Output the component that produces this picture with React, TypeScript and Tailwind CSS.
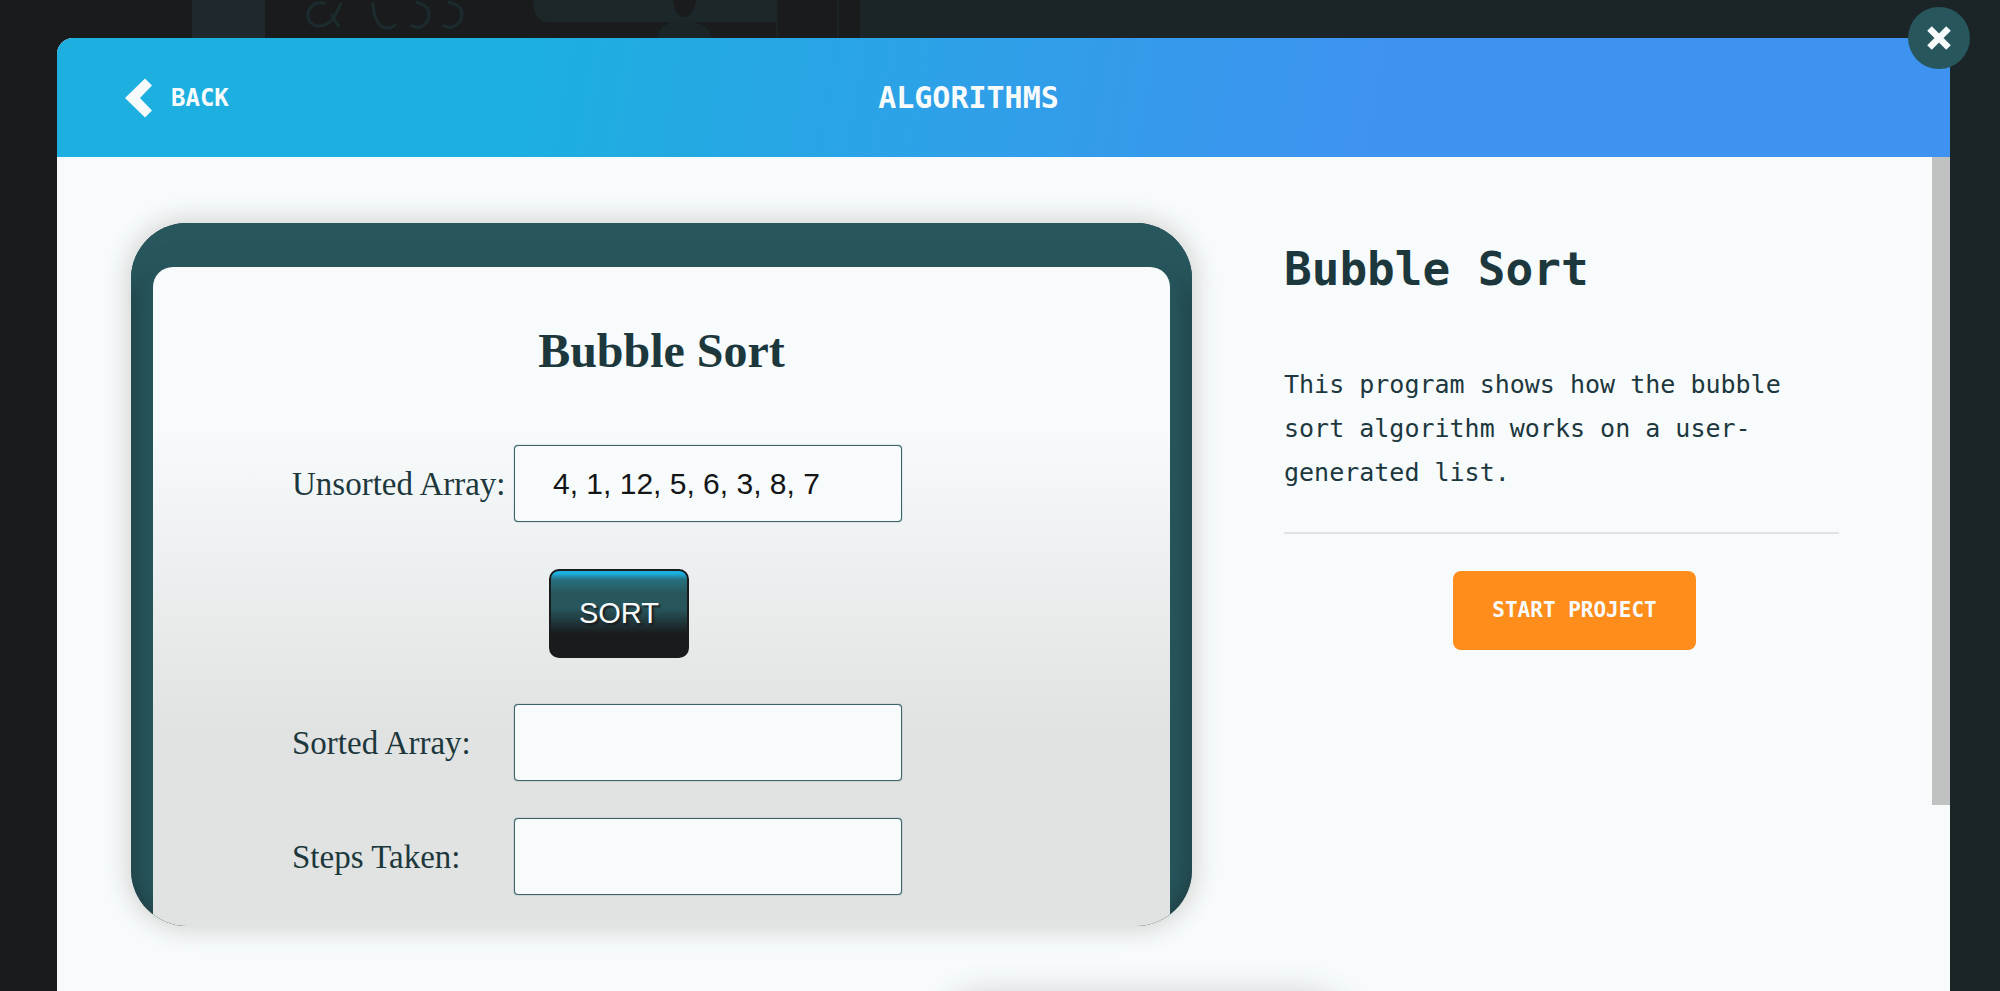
import React from "react";

const MONO = "font-['DejaVu_Sans_Mono',monospace]";

function Backdrop() {
  return (
    <div aria-hidden="true" className="absolute inset-0 flex overflow-hidden">
      <svg className="h-10 w-[860px] shrink-0" viewBox="0 0 860 40">
        <rect x="192" y="0" width="73" height="40" fill="#1d292c" />
        <g fill="none" stroke="#1c2b2e" strokeWidth="3">
          <path d="M326 3h-7c-6 0-11 5-11 12s5 11 11 11c12 0 17-11 22-23M331 14l8 13" />
          <path d="M373 2c0 14 5 26 14 26 4 0 7-2 9-4M410 25c10 6 19-1 19-11 0-6-5-10-13-12M442 25c10 6 20-1 20-11 0-6-5-10-14-12" />
        </g>
        <path d="M533 0h140c1 10 5 17 11 17s11-7 12-17h80v22H547c-9 0-14-10-14-22z" fill="#1c272a" />
        <path d="M656 40c2-10 8-16 16-18h22c10 2 16 8 19 18z" fill="#1b2427" />
        <path d="M777 0v40M838 0v40" stroke="#1c2d31" strokeWidth="1" />
      </svg>
      <div className="grow bg-[#1b2427]" />
    </div>
  );
}

function Field({ id, label, value }: { id: string; label: string; value?: string }) {
  return (
    <div className="flex items-center">
      <label htmlFor={id} className="w-[222px] shrink-0 text-[33px] leading-[40px] whitespace-nowrap">
        {label}
      </label>
      <input
        id={id}
        type="text"
        defaultValue={value}
        className="h-[77px] w-[388px] rounded-sm border border-[#3a646a] bg-[#f7fbfc] px-[38px] font-['Liberation_Sans',Arial,sans-serif] text-[30px] text-[#141516] shadow-[0_0_1px_#27565c]"
      />
    </div>
  );
}

export default function App() {
  return (
    <div className="relative flex h-screen flex-col overflow-hidden bg-[#1a1b1d] pt-[38px] pr-[50px] pl-[57px] text-[#1d383d]">
      <Backdrop />
      <main className="relative flex min-h-0 grow flex-col rounded-t-2xl bg-[#f7fbfc]">
        <header className={`grid h-[119px] shrink-0 grid-cols-3 items-center rounded-t-2xl bg-linear-[100deg,#1cafdf_24%,#3f93f0_70%] pr-[138px] pl-[68px] font-bold text-[#f7fbfc] ${MONO}`}>
          <a href="#back" className="flex items-center gap-[18px] text-[24px]">
            <svg className="h-10 w-7" viewBox="0 0 28 40">
              <path d="M0 20 20 0.5 27 7.500 15 20 27 32.500 20 39.500z" fill="currentColor" />
            </svg>
            BACK
          </a>
          <h2 className="text-center text-[30px]">ALGORITHMS</h2>
        </header>
        <button
          type="button"
          aria-label="Close"
          className="absolute -top-[31px] -right-5 z-10 flex size-[62px] items-center justify-center rounded-full bg-[#27565c] text-[#f7fbfc]"
        >
          <svg className="size-7" viewBox="0 0 28 28">
            <path d="M4.500 4.500 23.500 23.500M23.500 4.500 4.500 23.500" stroke="currentColor" strokeWidth="6.500" />
          </svg>
        </button>

        <div className="flex min-h-0 grow">
          <div className="min-w-0 grow overflow-hidden">
            <div className="flex items-start gap-[92px] pt-[66px] pr-[93px] pl-[74px]">
              <section className="h-[703px] grow overflow-hidden rounded-[56px] bg-[#27565c] px-[22px] pt-11 shadow-[0_0_24px_4px_#d3d4d2,inset_0_40px_14px_-6px_#27565c,inset_0_0_24px_#1c373b]">
                <form className="flex h-full flex-col rounded-t-[20px] bg-linear-[180deg,#f7fbfc_24%,#e1e3e2_70%] pt-14 pl-[139px] font-['Liberation_Serif',serif]" onSubmit={(e) => e.preventDefault()}>
                  <h3 className="mr-[139px] text-center text-[48px] leading-[56px] font-bold">Bubble Sort</h3>
                  <div className="mt-[66px]">
                    <Field id="unsorted" label="Unsorted Array:" value="4, 1, 12, 5, 6, 3, 8, 7" />
                  </div>
                  <button
                    type="submit"
                    className="mt-[47px] mb-[46px] ml-[257px] h-[89px] w-[140px] rounded-[10px] border-2 border-[#1a1b1d] bg-linear-[180deg,#1cafdf_3%,#27707f_10%,#27565c_26%,#27565c_44%,#1a1b1d_74%] font-['Liberation_Sans',Arial,sans-serif] text-[29px] text-[#f7fbfc] text-shadow-[2px_2px_2px_#1a1b1d]"
                  >
                    SORT
                  </button>
                  <div className="flex flex-col gap-[37px]">
                    <Field id="sorted" label="Sorted Array:" />
                    <Field id="steps" label="Steps Taken:" />
                  </div>
                </form>
              </section>
              <aside className={`w-[555px] shrink-0 ${MONO}`}>
                <h1 className="pt-4 text-[46px] leading-[60px] font-bold">Bubble Sort</h1>
                <p className="mt-16 border-b-2 border-[#e1e3e2] pb-[37px] text-[25px] leading-[44px]">
                  This program shows how the bubble sort algorithm works on a user-generated list.
                </p>
                <div className="flex justify-center pt-[37px] pl-[26px]">
                  <button type="button" className="h-[79px] w-[243px] rounded-lg bg-[#ff8d1c] text-[21px] font-bold text-[#f7fbfc]">
                    START PROJECT
                  </button>
                </div>
              </aside>
            </div>
            <div className="mt-[76px] ml-[888px] h-20 w-[400px] rounded-[40px] bg-[#27565c] shadow-[0_0_36px_4px_#c4c5c3]" />
          </div>
          <div className="h-[648px] w-[18px] shrink-0 bg-[#c0c1c1]" />
        </div>
      </main>
    </div>
  );
}
